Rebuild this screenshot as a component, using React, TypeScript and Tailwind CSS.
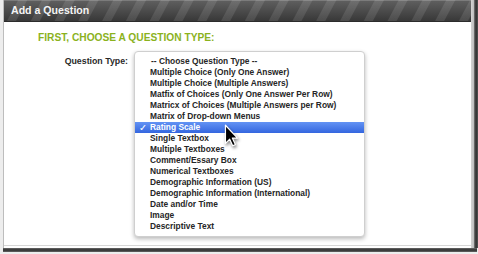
import React from 'react';

const questionTypes = [
  '-- Choose Question Type --',
  'Multiple Choice (Only One Answer)',
  'Multiple Choice (Multiple Answers)',
  'Matfix of Choices (Only One Answer Per Row)',
  'Matricx of Choices (Multiple Answers per Row)',
  'Matrix of Drop-down Menus',
  'Rating Scale',
  'Single Textbox',
  'Multiple Textboxes',
  'Comment/Essary Box',
  'Numerical Textboxes',
  'Demographic Information (US)',
  'Demographic Information (International)',
  'Date and/or Time',
  'Image',
  'Descriptive Text',
];

const selected = 'Rating Scale';

function Pointer() {
  return (
    <svg
      className="absolute left-[224px] top-[124px] h-[23px] w-[15px] drop-shadow-[1px_2px_1.5px_rgba(0,0,0,0.45)]"
      viewBox="0 0 12 19"
    >
      <path d="M1 1 V16 L4.5 12.6 L7 18 L9.2 17 L6.7 11.6 H11 Z" fill="#000" stroke="#fff" strokeWidth="1" strokeLinejoin="round" />
    </svg>
  );
}

function QuestionMenu() {
  return (
    <div className="w-[231px] rounded-[4px] border border-[#cfcfcf] bg-white py-[4px] shadow-[0_2px_4px_rgba(0,0,0,0.28)]">
      {questionTypes.map((label, i) => {
        const active = label === selected;
        return (
          <div
            key={label}
            className={
              active
                ? 'flex h-[11px] items-center bg-[linear-gradient(#6393f4,#3466df)] text-white'
                : 'flex h-[11px] items-center text-[#262626]'
            }
          >
            <span className="w-[15px] pl-[4px] font-['DejaVu_Sans',sans-serif] text-[9.5px] font-bold leading-[11px]">
              {active ? '✓' : ''}
            </span>
            <span className={i === 0 ? 'pl-[1px] text-[8.4px] leading-[11px] font-bold' : 'text-[8.4px] leading-[11px] font-bold'}>
              {label}
            </span>
          </div>
        );
      })}
    </div>
  );
}

export default function App() {
  return (
    <div className="relative flex h-[254px] w-[478px] flex-col overflow-hidden bg-[#ededed] font-['Liberation_Sans',Arial,sans-serif]">
      <div className="flex h-[248px]">
        <div className="ml-[3px] flex w-[468px] flex-col border-l border-[#bdbdbd] bg-white">
          <div className="flex h-[22px] items-center border-b border-[#2c2c2c] bg-[image:repeating-linear-gradient(118deg,rgba(255,255,255,0)_0px,rgba(255,255,255,0)_12px,rgba(255,255,255,0.1)_13px,rgba(255,255,255,0.1)_20px,rgba(255,255,255,0)_21px),linear-gradient(#606060,#383838)] pl-[7px] shadow-[inset_0_1px_0_rgba(255,255,255,0.18)]">
            <span className="text-[10.6px] font-bold text-[#f4f4f4]">Add a Question</span>
          </div>
          <div className="h-[224px] border-b border-[#d6d6d6]">
            <h2 className="pl-[34px] pt-[10px] text-[10.2px] font-bold leading-[12px] text-[#8bb21d]">
              FIRST, CHOOSE A QUESTION TYPE:
            </h2>
            <div className="mt-[7px] flex gap-[6px]">
              <div className="w-[124px] pt-[5px] text-right text-[8.8px] font-bold leading-[11px] text-[#2a2a2a]">
                Question Type:
              </div>
              <QuestionMenu />
            </div>
          </div>
        </div>
        <div className="w-[3px] bg-[linear-gradient(90deg,#d4d4d4,#bcbcbc)]" />
        <div className="w-[4px] bg-[linear-gradient(90deg,#7a7a7a,#2e2e2e,#555)]" />
      </div>
      <div className="ml-[3px] h-[4px] w-[474px] bg-[linear-gradient(#6a6a6a,#2e2e2e,#666)]" />
      <Pointer />
    </div>
  );
}
